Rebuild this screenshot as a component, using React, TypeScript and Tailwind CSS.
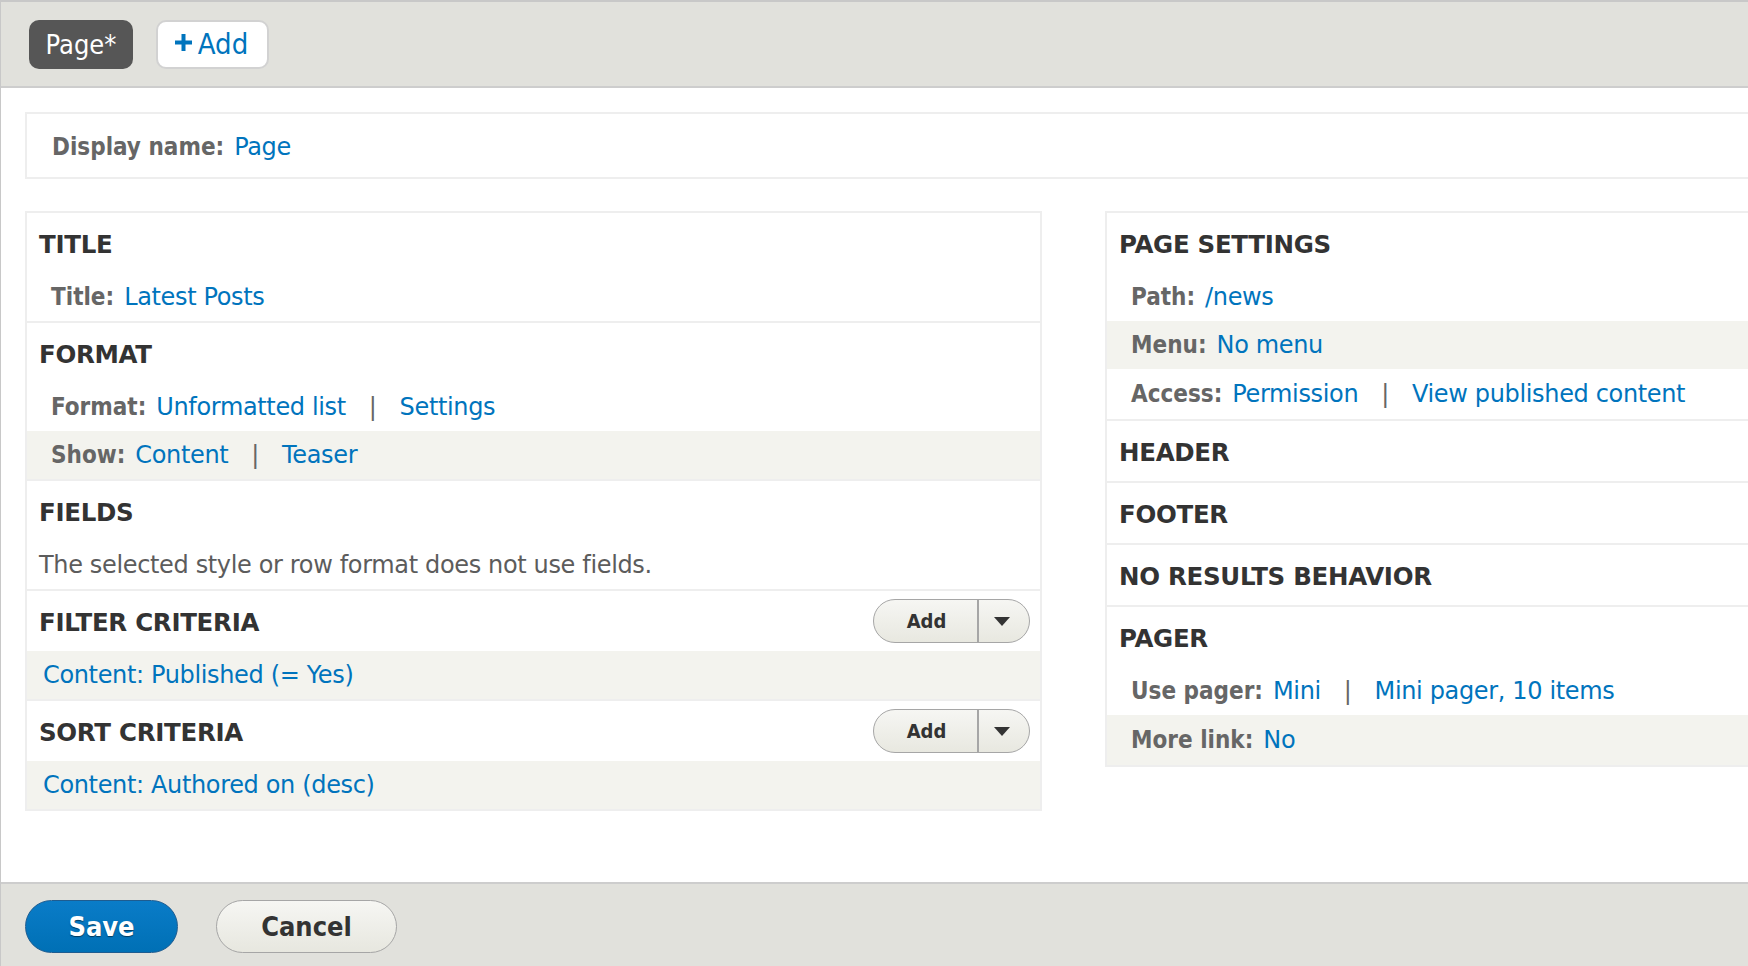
import type { ReactNode } from "react"

const cond = "font-['DejaVu_Sans_Condensed','DejaVu_Sans',sans-serif] font-stretch-condensed"

function Label({ children }: { children: ReactNode }) {
    return <span className={`${cond} mr-[10px] font-bold tracking-normal text-[#666]`}>{children}</span>
}

function A({ children }: { children: ReactNode }) {
    return <span className="text-[#0074bd]">{children}</span>
}

function Sep() {
    return <span className="mx-[23px] text-[#666]">|</span>
}

function AddDropdown() {
    return (
        <div className="flex h-[44px] w-[157px] items-stretch overflow-hidden rounded-full border-[1.5px] border-[#a6a6a6] bg-linear-to-b from-[#f6f6f3] to-[#e8e8e0]">
            <span className={`${cond} flex w-[103px] items-center justify-center pl-[2px] text-[20px] font-bold tracking-normal text-[#333]`}>
                Add
            </span>
            <span className="w-[1.5px] bg-[#a6a6a6]" />
            <span className="flex flex-1 items-center justify-center pr-[4px]">
                <svg width="16" height="9" viewBox="0 0 16 9">
                    <path d="M0 0h16L8 9z" fill="#333" />
                </svg>
            </span>
        </div>
    )
}

function Heading({ title, action }: { title: string; action?: boolean }) {
    return (
        <div className="flex h-[60px] items-center justify-between pl-[12px] pr-[10px]">
            <h3 className="pt-[4px] text-[24.5px] font-bold uppercase tracking-[-0.3px] text-[#333]">{title}</h3>
            {action && <AddDropdown />}
        </div>
    )
}

function Row({
    gray,
    pad = "pl-[24px]",
    tall,
    children,
}: {
    gray?: boolean
    pad?: string
    tall?: boolean
    children: ReactNode
}) {
    return (
        <div className={`flex items-center ${tall ? "h-[50px]" : "h-[48px]"} ${pad} ${gray ? "bg-[#f3f3ee]" : ""}`}>
            {children}
        </div>
    )
}

function Section({ first, children }: { first?: boolean; children: ReactNode }) {
    return <div className={first ? "" : "border-t-2 border-[#eeeeee]"}>{children}</div>
}

export default function App() {
    return (
        <div className="flex h-[966px] w-[1748px] flex-col overflow-hidden border-l border-t-2 border-[#c8c8c8] font-['DejaVu_Sans',sans-serif] text-[24px] leading-none tracking-[-0.35px]">
            {/* top bar */}
            <div className="flex h-[86px] shrink-0 items-center gap-[23px] border-b-2 border-[#cdcdcd] bg-[#e1e1dc] pl-[28px]">
                <div className={`${cond} flex h-[49px] w-[104px] items-center justify-center rounded-[10px] bg-[#565656] text-[27px] tracking-normal text-white`}>
                    Page*
                </div>
                <div className="flex h-[49px] w-[113px] items-center justify-center gap-[6px] rounded-[10px] border-2 border-[#d2d2d2] bg-white pr-[2px] text-[#0074bd]">
                    <svg width="17" height="17" viewBox="0 0 17 17" className="mb-[3px]">
                        <path d="M6.5 0h4v6.5H17v4h-6.5V17h-4v-6.5H0v-4h6.5z" fill="#0074bd" />
                    </svg>
                    <span className={`${cond} text-[29px] tracking-normal`}>Add</span>
                </div>
            </div>

            {/* content */}
            <div className="flex-1 bg-white pl-[24px] pt-[24px]">
                <div className="flex h-[67px] w-[2200px] items-center border-2 border-[#eeeeee] pl-[25px] pt-[2px]">
                    <Label>Display name:</Label>
                    <A>Page</A>
                </div>

                <div className="mt-[32px] flex w-[2200px] items-start gap-[63px]">
                    {/* left column */}
                    <div className="w-[1017px] shrink-0 border-2 border-[#eeeeee]">
                        <Section first>
                            <Heading title="Title" />
                            <Row>
                                <Label>Title:</Label>
                                <A>Latest Posts</A>
                            </Row>
                        </Section>
                        <Section>
                            <Heading title="Format" />
                            <Row>
                                <Label>Format:</Label>
                                <A>Unformatted list</A>
                                <Sep />
                                <A>Settings</A>
                            </Row>
                            <Row gray>
                                <Label>Show:</Label>
                                <A>Content</A>
                                <Sep />
                                <A>Teaser</A>
                            </Row>
                        </Section>
                        <Section>
                            <Heading title="Fields" />
                            <Row pad="pl-[12px]">
                                <span className="text-[#5c5c5c]">The selected style or row format does not use fields.</span>
                            </Row>
                        </Section>
                        <Section>
                            <Heading title="Filter criteria" action />
                            <Row gray pad="pl-[16px]">
                                <A>Content: Published (= Yes)</A>
                            </Row>
                        </Section>
                        <Section>
                            <Heading title="Sort criteria" action />
                            <Row gray pad="pl-[16px]">
                                <A>Content: Authored on (desc)</A>
                            </Row>
                        </Section>
                    </div>

                    {/* right column */}
                    <div className="w-[1017px] shrink-0 border-2 border-[#eeeeee]">
                        <Section first>
                            <Heading title="Page settings" />
                            <Row>
                                <Label>Path:</Label>
                                <A>/news</A>
                            </Row>
                            <Row gray>
                                <Label>Menu:</Label>
                                <A>No menu</A>
                            </Row>
                            <Row tall>
                                <Label>Access:</Label>
                                <A>Permission</A>
                                <Sep />
                                <A>View published content</A>
                            </Row>
                        </Section>
                        <Section>
                            <Heading title="Header" />
                        </Section>
                        <Section>
                            <Heading title="Footer" />
                        </Section>
                        <Section>
                            <Heading title="No results behavior" />
                        </Section>
                        <Section>
                            <Heading title="Pager" />
                            <Row>
                                <Label>Use pager:</Label>
                                <A>Mini</A>
                                <Sep />
                                <A>Mini pager, 10 items</A>
                            </Row>
                            <Row gray tall>
                                <Label>More link:</Label>
                                <A>No</A>
                            </Row>
                        </Section>
                    </div>
                </div>
            </div>

            {/* footer */}
            <div className="flex h-[84px] shrink-0 items-start gap-[38px] border-t-2 border-[#cdcdcd] bg-[#e1e1dc] pl-[24px] pt-[16px]">
                <div
                    className={`${cond} flex h-[53px] w-[153px] items-center justify-center rounded-full border border-[#1e5c90] bg-linear-to-b from-[#0a7cc8] to-[#0070b5] text-[27px] font-bold tracking-normal text-white [text-shadow:0_1px_1px_rgba(0,0,0,0.5)]`}
                >
                    Save
                </div>
                <div
                    className={`${cond} flex h-[53px] w-[181px] items-center justify-center rounded-full border-[1.5px] border-[#a6a6a6] bg-linear-to-b from-[#f6f6f3] to-[#e7e7df] text-[27px] font-bold tracking-normal text-[#333]`}
                >
                    Cancel
                </div>
            </div>
        </div>
    )
}
